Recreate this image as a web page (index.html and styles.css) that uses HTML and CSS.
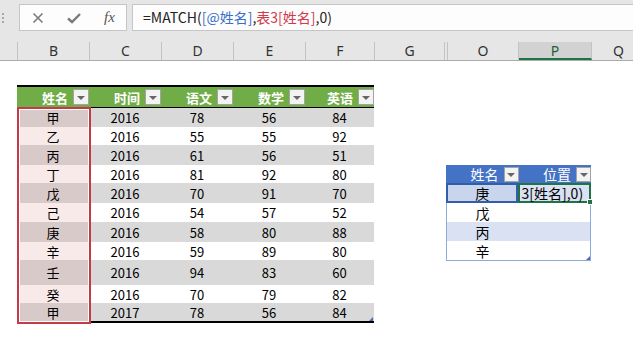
FILE: index.html
```html
<!DOCTYPE html>
<html lang="zh">
<head>
    <meta charset="UTF-8">
    <title>MATCH 查找位置</title>
    <link rel="stylesheet" href="styles.css">
</head>
<body>
    <!-- Formula bar -->
    <div class="formula-bar">
        <div class="grip"><span></span><span></span><span></span></div>
        <div class="fx-box">
            <svg class="icon" width="12" height="12" viewBox="0 0 12 12"><path d="M1.5 1.5 L10.5 10.5 M10.5 1.5 L1.5 10.5" stroke="#7b7b7b" stroke-width="1.6" fill="none"/></svg>
            <svg class="icon" width="14" height="12" viewBox="0 0 14 12"><path d="M1 6.5 L5 10 L13 2" stroke="#7b7b7b" stroke-width="2.4" fill="none"/></svg>
            <span class="fx">fx</span>
        </div>
        <div class="formula">=MATCH(<span class="ref-blue">[@姓名]</span>,<span class="ref-red">表3[姓名]</span>,0)</div>
    </div>

    <!-- Column headers -->
    <div class="col-heads">
        <div class="ch ch-corner"></div>
        <div class="ch ch-w72">B</div>
        <div class="ch ch-w72">C</div>
        <div class="ch ch-w72">D</div>
        <div class="ch ch-w72">E</div>
        <div class="ch ch-f">F</div>
        <div class="ch ch-g">G</div>
        <div class="ch ch-hidden"></div>
        <div class="ch ch-o">O</div>
        <div class="ch ch-p active">P</div>
        <div class="ch ch-q">Q</div>
    </div>

    <div class="sheet">
        <!-- Table 1: scores -->
        <div class="t1-wrap">
            <div class="t1">
                <div class="t1-head">
                    <div class="hc c72">姓名<span class="dd"></span></div>
                    <div class="hc c72">时间<span class="dd"></span></div>
                    <div class="hc c72">语文<span class="dd"></span></div>
                    <div class="hc c72">数学<span class="dd"></span></div>
                    <div class="hc c70">英语<span class="dd"></span></div>
                </div>
                <div class="r band h19"><div class="nm c72">甲</div><div class="c72">2016</div><div class="c72">78</div><div class="c72">56</div><div class="c70">84</div></div>
                <div class="r h18"><div class="nm c72">乙</div><div class="c72">2016</div><div class="c72">55</div><div class="c72">55</div><div class="c70">92</div></div>
                <div class="r band h20"><div class="nm c72">丙</div><div class="c72">2016</div><div class="c72">61</div><div class="c72">56</div><div class="c70">51</div></div>
                <div class="r h18"><div class="nm c72">丁</div><div class="c72">2016</div><div class="c72">81</div><div class="c72">92</div><div class="c70">80</div></div>
                <div class="r band h20"><div class="nm c72">戊</div><div class="c72">2016</div><div class="c72">70</div><div class="c72">91</div><div class="c70">70</div></div>
                <div class="r h19"><div class="nm c72">己</div><div class="c72">2016</div><div class="c72">54</div><div class="c72">57</div><div class="c70">52</div></div>
                <div class="r band h20"><div class="nm c72">庚</div><div class="c72">2016</div><div class="c72">58</div><div class="c72">80</div><div class="c70">88</div></div>
                <div class="r h18"><div class="nm c72">辛</div><div class="c72">2016</div><div class="c72">59</div><div class="c72">89</div><div class="c70">80</div></div>
                <div class="r band h25"><div class="nm c72">壬</div><div class="c72">2016</div><div class="c72">94</div><div class="c72">83</div><div class="c70">60</div></div>
                <div class="r h18"><div class="nm c72">癸</div><div class="c72">2016</div><div class="c72">70</div><div class="c72">79</div><div class="c70">82</div></div>
                <div class="r band h18"><div class="nm c72">甲</div><div class="c72">2017</div><div class="c72">78</div><div class="c72">56</div><div class="c70">84</div></div>
            </div>
            <div class="name-outline"></div>
            <div class="resize"></div>
        </div>

        <!-- Table 2: lookup -->
        <div class="t2-wrap">
            <div class="t2">
                <div class="t2-head">
                    <div class="hc2 o">姓名<span class="dd dd2"></span></div>
                    <div class="hc2 p">位置<span class="dd dd2"></span></div>
                </div>
                <div class="r2 band2 h20">
                    <div class="o sel">庚</div>
                    <div class="p edit">3[姓名],0)<span class="handle"></span></div>
                </div>
                <div class="r2 h19"><div class="o">戊</div><div class="p"></div></div>
                <div class="r2 band2 h19"><div class="o">丙</div><div class="p"></div></div>
                <div class="r2 h19"><div class="o">辛</div><div class="p"></div></div>
            </div>
            <div class="resize resize2"></div>
        </div>
    </div>
</body>
</html>
```

FILE: styles.css
```css
/* General */
* {
    box-sizing: border-box;
}

body {
    margin: 0;
    width: 633px;
    height: 356px;
    overflow: hidden;
    background: #fff;
    font-family: "Noto Sans CJK SC", "Noto Sans", sans-serif;
    color: #000;
}

/* Formula bar */
.formula-bar {
    height: 42px;
    background: #e6e6e6;
    display: flex;
    align-items: flex-start;
    padding-top: 4px;
}

.grip {
    width: 19px;
    padding: 9px 0 0 2px;
    display: flex;
    flex-direction: column;
    gap: 2px;
}

.grip span {
    width: 2px;
    height: 2px;
    background: #a8a8a8;
}

.fx-box {
    width: 108px;
    height: 27px;
    background: #fdfdfd;
    border: 1px solid #c6c6c6;
    display: flex;
    align-items: center;
    padding-left: 12px;
    gap: 23px;
}

.fx {
    font-family: "Liberation Serif", serif;
    font-style: italic;
    font-size: 15px;
    color: #555;
}

.formula {
    margin-left: 5px;
    flex: 1;
    height: 27px;
    background: #fdfdfd;
    border: 1px solid #c6c6c6;
    border-right: none;
    padding-left: 10px;
    font-size: 14px;
    line-height: 25px;
    color: #222;
}

.ref-blue { color: #3b6fc8; }
.ref-red { color: #d03a4c; }

/* Column headers */
.col-heads {
    display: flex;
    height: 19px;
    background: #e6e6e6;
    border-bottom: 1px solid #ababab;
}

.ch {
    border-right: 1px solid #c3c3c3;
    font-family: "Noto Sans", sans-serif;
    font-size: 14px;
    line-height: 18px;
    text-align: center;
    color: #333;
}

.ch-corner { width: 18px; }
.ch-w72 { width: 72px; }
.ch-f { width: 69px; }
.ch-g { width: 70px; }
.ch-hidden { width: 3px; }
.ch-o { width: 71px; }
.ch-p { width: 73px; }
.ch-q { flex: 1; border-right: none; text-align: left; padding-left: 21px; }

.ch.active {
    background: #d2d2d2;
    border-bottom: 2px solid #217346;
    color: #1e5e3b;
}

/* Sheet */
.sheet {
    display: flex;
    align-items: flex-start;
    padding-left: 17px;
}

/* Table 1 */
.t1-wrap {
    position: relative;
    margin-top: 24px;
    width: 357px;
}

.t1 {
    border-top: 2px solid #000;
    border-bottom: 2px solid #000;
}

.t1-head {
    display: flex;
    height: 21px;
    background: #70ad47;
    border-bottom: 1px solid #000;
}

.c72 { width: 72px; flex: none; }
.c70 { width: 69px; flex: none; }

.hc {
    display: flex;
    align-items: center;
    justify-content: flex-end;
    color: #fff;
    font-weight: 700;
    font-size: 13px;
    line-height: 1;
    gap: 5px;
}

.dd {
    width: 16px;
    height: 16px;
    flex: none;
    background: #f3f3f3;
    border: 1px solid #a3a3a3;
    display: flex;
    align-items: center;
    justify-content: center;
}

.dd::after {
    content: "";
    border-left: 4px solid transparent;
    border-right: 4px solid transparent;
    border-top: 4px solid #666;
    margin-top: 1px;
}

.r {
    display: flex;
    font-size: 13px;
    line-height: 1;
}

.r > div {
    display: flex;
    align-items: center;
    justify-content: center;
}

.r.band { background: #d9d9d9; }
.r .nm { background: #f9eaea; }
.r.band .nm { background: #d9caca; }

.h18 { height: 18px; }
.h19 { height: 19px; }
.h20 { height: 20px; }
.h25 { height: 25px; }

.name-outline {
    position: absolute;
    left: 0;
    top: 22px;
    width: 74px;
    bottom: -1px;
    border: 2px solid #c43b48;
    box-shadow: inset 0 0 0 1px #fff;
}

.resize {
    position: absolute;
    right: 1px;
    bottom: 2px;
    width: 0;
    height: 0;
    border-left: 4px solid transparent;
    border-bottom: 4px solid #4a6bbf;
}

/* Table 2 */
.t2-wrap {
    position: relative;
    margin-top: 104px;
    margin-left: 72px;
    width: 145px;
}

.t2 {
    border: 1px solid #8eaadb;
    border-top: none;
}

.t2-head {
    display: flex;
    height: 18px;
    background: #4472c4;
    margin: 0 -1px;
}

.o { width: 72px; }
.p { width: 73px; }

.t2-head .o { width: 73px; }

.hc2 {
    display: flex;
    align-items: center;
    justify-content: flex-end;
    color: #fff;
    font-size: 14px;
    line-height: 1;
    gap: 5px;
}

.dd2 {
    width: 15px;
    height: 15px;
}

.r2 {
    display: flex;
    font-size: 14px;
    line-height: 1;
}

.r2 > div {
    display: flex;
    align-items: center;
    justify-content: center;
}

.r2.band2 { background: #d9e1f2; }

.r2 .sel {
    background: #c9d5ec;
    border: 2px solid #2f5fa8;
    margin-left: -1px;
    width: 74px;
}

.r2 .edit {
    position: relative;
    justify-content: flex-start;
    border: 2px solid #217346;
    padding-left: 1px;
    margin-right: -1px;
    width: 74px;
}

.handle {
    position: absolute;
    right: -4px;
    bottom: -4px;
    width: 6px;
    height: 6px;
    background: #217346;
    border: 1px solid #fff;
}

.resize2 {
    bottom: 1px;
}
```
